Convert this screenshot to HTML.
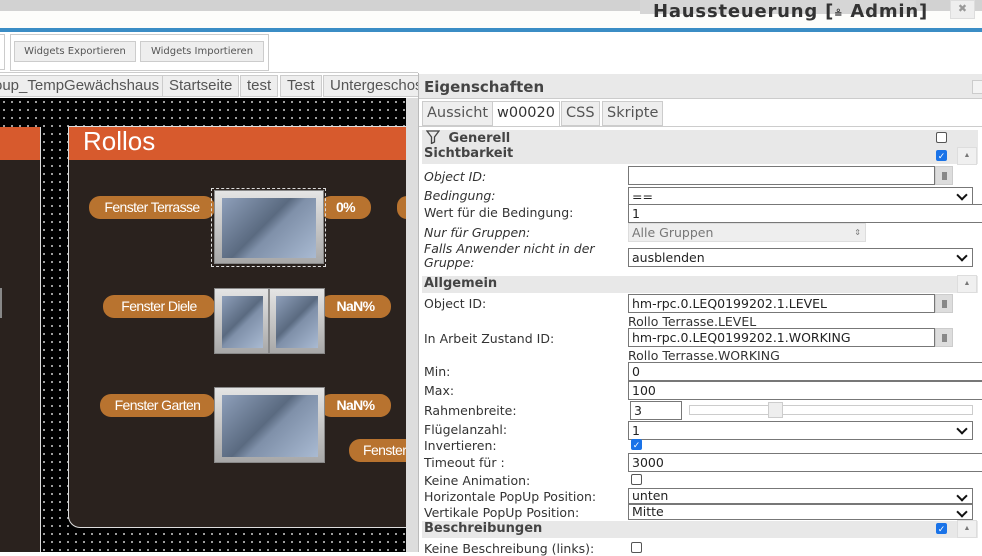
<!DOCTYPE html>
<html><head><meta charset="utf-8"><style>
*{box-sizing:border-box;margin:0;padding:0}
body{width:982px;height:552px;overflow:hidden;background:#fff;font-family:"Liberation Sans",sans-serif;position:relative}
.a{position:absolute}
.v{font-family:"DejaVu Sans",sans-serif}
.btn{position:absolute;top:41px;height:21px;border:1px solid #ccc;background:#eee;font-size:10px;color:#555;text-align:center;line-height:19px;font-family:"DejaVu Sans",sans-serif}
.tab{position:absolute;top:75px;height:22px;border:1px solid #ccc;background:#eee;font-size:15px;color:#555;line-height:20px;padding:0 6px}
.pill{position:absolute;background:#b8732f;color:#fff;font-size:14px;border-radius:11px;height:23px;line-height:23px;letter-spacing:-0.6px;text-align:center;font-weight:bold;-webkit-text-stroke:0}
.win{position:absolute;background:linear-gradient(#e4e4e4,#a8a8a8);border:1px solid #888}
.gl{position:absolute;background:linear-gradient(135deg,#8e9fba 0%,#5a6a80 45%,#7f90a9 55%,#a9bad2 100%)}
.lb{position:absolute;left:424px;font-size:12.5px;color:#333;font-family:"DejaVu Sans",sans-serif}
.i{font-style:italic}
.in{position:absolute;left:628px;height:19px;border:1px solid #777;background:#fff;font-size:12.5px;line-height:17px;padding-left:3px;color:#222;font-family:"DejaVu Sans",sans-serif}
.sel::after{content:"";position:absolute;right:6px;top:3px;width:6px;height:6px;border-right:2px solid #111;border-bottom:2px solid #111;transform:rotate(45deg)}
.hd{position:absolute;left:422px;width:556px;height:17px;background:#e8e8e8;font-weight:bold;font-size:13px;color:#444;padding-left:2px;font-family:"DejaVu Sans",sans-serif}
.cb{position:absolute;width:11px;height:11px;border:1px solid #555;border-radius:2px;background:#fff}
.cbc{background:#1a73e8;border-color:#1a73e8;color:#fff;font-size:9px;line-height:10px;text-align:center}
.up{position:absolute;left:957px;width:20px;height:18px;border:1px solid #ddd;background:#f0f0f0;font-size:7px;color:#777;text-align:center;line-height:16px}
.pk{position:absolute;left:935px;width:18px;height:19px;background:#ddd;border:1px solid #ccc}
.pk::after{content:"";position:absolute;left:6px;top:5px;width:5px;height:8px;background:#888}
</style></head><body>
<div class="a" style="left:0;top:0;width:982px;height:11px;background:#d2d2d2"></div>
<div class="a" style="left:0;top:11px;width:982px;height:17px;background:#fdfdfb"></div>
<div class="a" style="left:640px;top:0;width:276px;height:14px;background:#d6d6d6"></div>
<div class="a v" style="left:653px;top:1px;font-size:18px;font-weight:bold;color:#333;letter-spacing:0.8px">Haussteuerung [<span style="font-size:10px">≗</span> Admin]</div>
<div class="a" style="left:950px;top:0;width:25px;height:19px;background:#eee;border:1px solid #ddd;color:#999;text-align:center;font-size:11px;line-height:16px">✖</div>
<div class="a" style="left:0;top:28px;width:982px;height:4px;background:#3b8dc5"></div>
<div class="a" style="left:0;top:34px;width:5px;height:36px;border:1px solid #ccc;border-left:none"></div>
<div class="a" style="left:10px;top:34px;width:259px;height:37px;border:1px solid #ccc"></div>
<div class="btn" style="left:14px;width:122px">Widgets Exportieren</div>
<div class="btn" style="left:140px;width:124px">Widgets Importieren</div>
<div class="a" style="left:0;top:72px;width:418px;height:1px;background:#ccc"></div>
<div class="tab" style="left:-12px;border-left:none">oup_TempGewächshaus</div>
<div class="tab" style="left:162px">Startseite</div>
<div class="tab" style="left:240px">test</div>
<div class="tab" style="left:280px">Test</div>
<div class="tab" style="left:323px;width:96px;overflow:hidden;white-space:nowrap">Untergeschoss</div>
<div class="a" style="left:0;top:98px;width:406px;height:454px;background-color:#000;background-image:radial-gradient(#bbb 0.8px,transparent 1.2px);background-size:8px 8px"></div>
<div class="a" style="left:0;top:127px;width:41px;height:425px;background:#2a221e;border-right:1px solid #ddd"></div>
<div class="a" style="left:0;top:127px;width:40px;height:33px;background:#d75a2d"></div>
<div class="a" style="left:0;top:288px;width:2px;height:30px;background:#888"></div>
<div class="a" style="left:68px;top:126px;width:340px;height:402px;background:#2a221e;border:1px solid #ddd;border-right:none;border-bottom-left-radius:12px"></div>
<div class="a" style="left:69px;top:127px;width:339px;height:33px;background:#d75a2d"></div>
<div class="a" style="left:83px;top:126px;font-size:26px;color:#fff">Rollos</div>
<div class="pill" style="left:89px;top:196px;width:126px;font-weight:normal">Fenster Terrasse</div>
<div class="pill" style="left:320px;top:196px;width:51px">0%</div>
<div class="pill" style="left:397px;top:196px;width:20px"></div>
<div class="a" style="left:211px;top:188px;width:115px;height:79px;border:1px dashed #ddd"></div>
<div class="win" style="left:214px;top:190px;width:110px;height:74px"><div class="gl" style="left:7px;top:7px;width:94px;height:60px"></div></div>
<div class="pill" style="left:103px;top:295px;width:112px;font-weight:normal">Fenster Diele</div>
<div class="pill" style="left:320px;top:295px;width:71px">NaN%</div>
<div class="win" style="left:214px;top:288px;width:55px;height:66px"><div class="gl" style="left:7px;top:7px;width:41px;height:52px"></div></div>
<div class="win" style="left:269px;top:288px;width:56px;height:66px"><div class="gl" style="left:6px;top:7px;width:42px;height:52px"></div></div>
<div class="pill" style="left:100px;top:394px;width:115px;font-weight:normal">Fenster Garten</div>
<div class="pill" style="left:320px;top:394px;width:71px">NaN%</div>
<div class="win" style="left:214px;top:387px;width:111px;height:76px"><div class="gl" style="left:7px;top:7px;width:96px;height:62px"></div></div>
<div class="pill" style="left:349px;top:439px;width:70px;text-align:left;padding-left:14px;border-radius:11px 0 0 11px;font-weight:normal">Fenster</div>
<div class="a" style="left:406px;top:98px;width:12px;height:454px;background:#ddd"></div>
<div class="a" style="left:418px;top:73px;width:564px;height:479px;border-left:1px solid #bbb;background:#fff"></div>
<div class="a" style="left:419px;top:74px;width:563px;height:25px;background:#e9e9e9;border-bottom:1px solid #ccc"></div>
<div class="a v" style="left:424px;top:78px;font-size:15px;font-weight:bold;color:#444">Eigenschaften</div>
<div class="a" style="left:972px;top:80px;width:12px;height:14px;border:1px solid #ccc;background:#f3f3f3"></div>
<div class="tab v" style="left:422px;top:101px;height:25px;font-size:14.5px;line-height:23px;padding:0 4px">Aussicht</div>
<div class="tab v" style="left:492px;top:101px;height:26px;font-size:14.5px;line-height:23px;padding:0 4px;background:#fff;border-bottom-color:#fff;color:#333">w00020</div>
<div class="tab v" style="left:561px;top:101px;height:25px;font-size:14.5px;line-height:23px;padding:0 4px">CSS</div>
<div class="tab v" style="left:602px;top:101px;height:25px;font-size:14.5px;line-height:23px;padding:0 4px">Skripte</div>
<div class="a" style="left:419px;top:126px;width:563px;height:1px;background:#ccc"></div>
<div class="hd" style="top:130px;height:34px;padding-top:0"><svg width="14" height="14" viewBox="0 0 14 14" style="vertical-align:-2px;margin:0 4px 0 2px"><path d="M1 1h12L8.5 7v5l-3 1.5V7z" fill="none" stroke="#444" stroke-width="1.3"/></svg> Generell<br>Sichtbarkeit</div>
<div class="cb" style="left:936px;top:132px"></div>
<div class="cb cbc" style="left:936px;top:150px">✓</div>
<div class="up" style="left:957px;top:147px">▲</div>
<div class="lb i" style="top:169px">Object ID:</div>
<div class="in" style="top:166px;width:307px"></div><div class="pk" style="top:166px"></div>
<div class="lb i" style="top:188px">Bedingung:</div>
<div class="in sel" style="top:187px;width:345px">==</div>
<div class="lb" style="top:205px">Wert für die Bedingung:</div>
<div class="in" style="top:204px;width:354px;border-right:none">1</div>
<div class="lb i" style="top:225px">Nur für Gruppen:</div>
<div class="in" style="top:223px;width:238px;background:#eee;border-color:#ddd;color:#777">Alle Gruppen<span style="position:absolute;right:4px;font-size:8px">⇕</span></div>
<div class="lb i" style="top:242px;line-height:14px">Falls Anwender nicht in der<br>Gruppe:</div>
<div class="in sel" style="top:248px;width:345px">ausblenden</div>
<div class="hd" style="top:276px">Allgemein</div>
<div class="up" style="left:957px;top:275px">▲</div>
<div class="lb" style="top:296px">Object ID:</div>
<div class="in" style="top:294px;width:307px">hm-rpc.0.LEQ0199202.1.LEVEL</div><div class="pk" style="top:294px"></div>
<div class="lb" style="left:628px;top:314px">Rollo Terrasse.LEVEL</div>
<div class="lb" style="top:331px">In Arbeit Zustand ID:</div>
<div class="in" style="top:328px;width:307px">hm-rpc.0.LEQ0199202.1.WORKING</div><div class="pk" style="top:328px"></div>
<div class="lb" style="left:628px;top:348px">Rollo Terrasse.WORKING</div>
<div class="lb" style="top:364px">Min:</div>
<div class="in" style="top:362px;width:354px;border-right:none">0</div>
<div class="lb" style="top:383px">Max:</div>
<div class="in" style="top:381px;width:354px;border-right:none">100</div>
<div class="lb" style="top:403px">Rahmenbreite:</div>
<div class="in" style="left:630px;top:401px;width:52px">3</div>
<div class="a" style="left:689px;top:405px;width:284px;height:10px;border:1px solid #ccc;background:#fff"></div>
<div class="a" style="left:768px;top:402px;width:15px;height:16px;border:1px solid #ccc;background:#eee"></div>
<div class="lb" style="top:422px">Flügelanzahl:</div>
<div class="in sel" style="top:421px;width:345px">1</div>
<div class="lb" style="top:438px">Invertieren:</div>
<div class="cb cbc" style="left:631px;top:439px">✓</div>
<div class="lb" style="top:455px">Timeout für :</div>
<div class="in" style="top:453px;width:354px;border-right:none">3000</div>
<div class="lb" style="top:473px">Keine Animation:</div>
<div class="cb" style="left:631px;top:474px"></div>
<div class="lb" style="top:489px">Horizontale PopUp Position:</div>
<div class="in sel" style="top:488px;width:345px;height:16px;line-height:14px">unten</div>
<div class="lb" style="top:505px">Vertikale PopUp Position:</div>
<div class="in sel" style="top:504px;width:345px;height:16px;line-height:14px">Mitte</div>
<div class="hd" style="top:521px">Beschreibungen</div>
<div class="cb cbc" style="left:936px;top:523px">✓</div>
<div class="up" style="left:957px;top:520px">▲</div>
<div class="lb" style="top:541px">Keine Beschreibung (links):</div>
<div class="cb" style="left:631px;top:542px"></div>
</body></html>
